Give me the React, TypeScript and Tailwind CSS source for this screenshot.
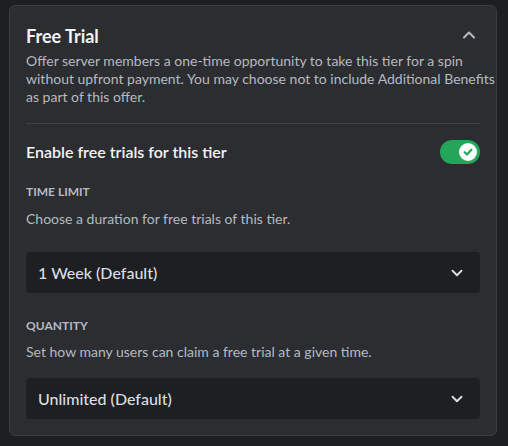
import { ChevronDown, ChevronUp } from 'lucide-react';

function Toggle() {
  return (
    <div className="relative h-6 w-10 shrink-0 rounded-full bg-[#23a55a]">
      <div className="absolute right-[3px] top-[3px] flex h-[18px] w-[18px] items-center justify-center rounded-full bg-white">
        <svg width="12" height="12" viewBox="0 0 12 12" fill="none">
          <path d="M2.6 6.2 L5 8.5 L9.4 3.7" stroke="#23a55a" strokeWidth="2.2" strokeLinecap="round" strokeLinejoin="round" />
        </svg>
      </div>
    </div>
  );
}

function Select({ value, className }: { value: string; className?: string }) {
  return (
    <div className={`flex h-[41px] items-center justify-between rounded bg-[#1e1f22] pl-3 pr-[14px] ${className ?? ''}`}>
      <span className="text-base font-medium text-[#dbdee1]">{value}</span>
      <ChevronDown size={18} strokeWidth={2.5} className="text-[#dbdee1]" />
    </div>
  );
}

export default function App() {
  return (
    <div
      className="h-[446px] w-[508px] bg-[#1e1f22] pl-[9px] pr-[11px] pt-[5px]"
      style={{ fontFamily: 'Lato, "Noto Sans", sans-serif' }}
    >
      <div className="rounded-md border border-[#3a3c42] bg-[#2b2d31] px-4 pb-4 pt-[18px]">
        <div className="flex items-start justify-between">
          <h2 className="text-lg font-bold leading-6 text-[#f2f3f5]">Free Trial</h2>
          <ChevronUp size={20} strokeWidth={2.5} className="mr-[1px] mt-[1px] text-[#b5bac1]" />
        </div>
        <p className="mt-1 whitespace-nowrap text-sm leading-[18px] text-[#b5bac1]">
          Offer server members a one-time opportunity to take this tier for a spin
          <br />
          without upfront payment. You may choose not to include Additional Benefits
          <br />
          as part of this offer.
        </p>
        <div className="mt-[17px] h-px bg-[#3f4147]"></div>

        <div className="mt-4 flex items-center justify-between">
          <span className="text-base font-semibold leading-5 text-[#f2f3f5]">Enable free trials for this tier</span>
          <Toggle />
        </div>

        <div className="mt-5 text-xs font-bold uppercase leading-4 text-[#b5bac1]">Time Limit</div>
        <p className="mt-2.5 text-sm leading-[18px] text-[#b5bac1]">Choose a duration for free trials of this tier.</p>
        <Select value="1 Week (Default)" className="mt-6" />

        <div className="mt-[25px] text-xs font-bold uppercase leading-4 text-[#b5bac1]">Quantity</div>
        <p className="mt-[9px] text-sm leading-[18px] text-[#b5bac1]">
          Set how many users can claim a free trial at a given time.
        </p>
        <Select value="Unlimited (Default)" className="mt-[17px]" />
      </div>
    </div>
  );
}
